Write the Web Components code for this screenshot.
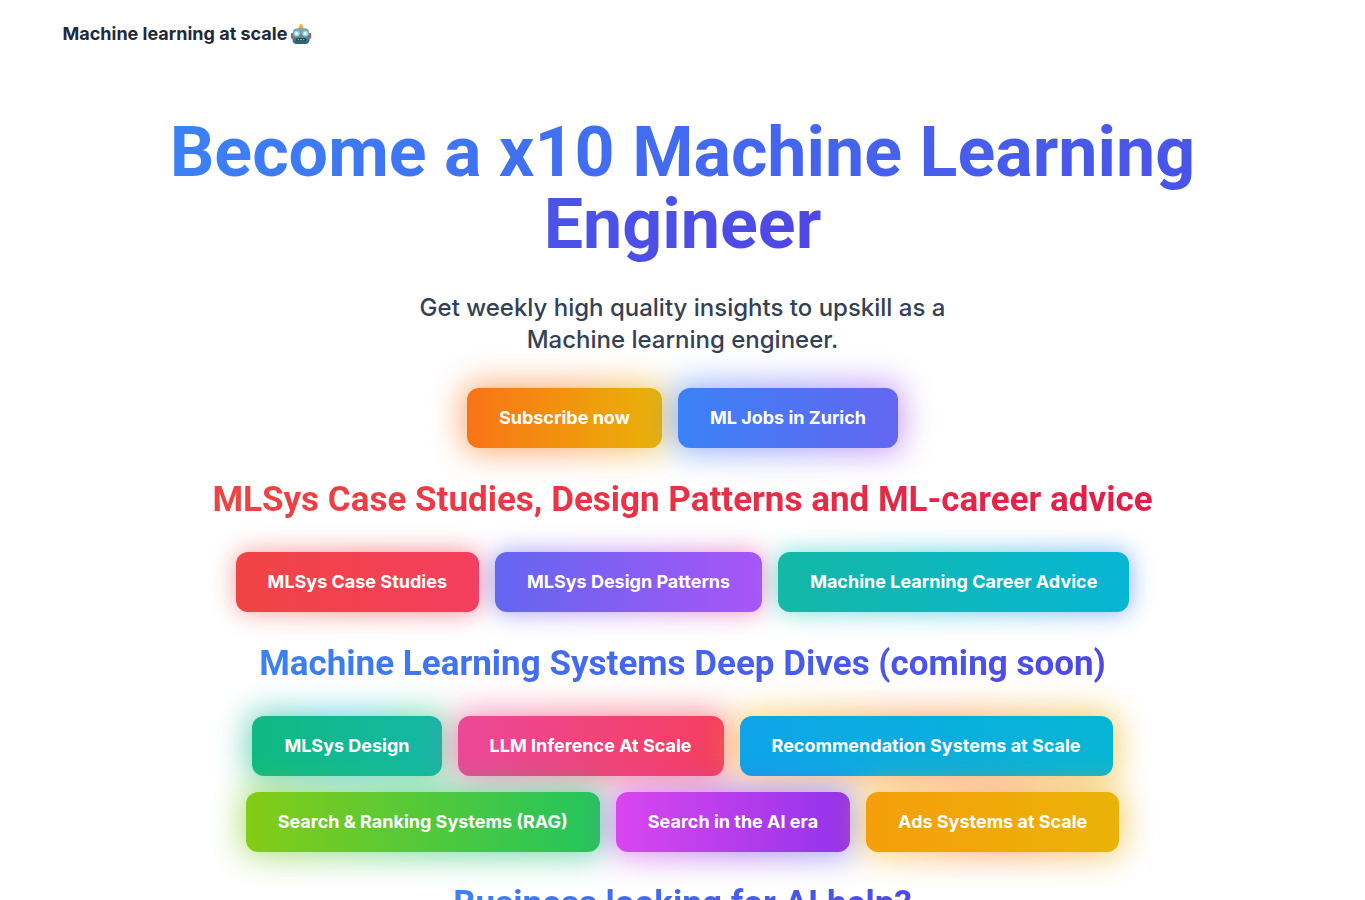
<!DOCTYPE html>
<html lang="en">
<head>
<meta charset="utf-8">
<meta name="viewport" content="width=device-width, initial-scale=1">
<title>Machine learning at scale</title>
<style>
  body { margin: 0; background: #fff; color: #1e293b; font-family: "Inter", "Liberation Sans", sans-serif; }
</style>
</head>
<body>
<landing-page></landing-page>

<script>
class RobotIcon extends HTMLElement {
  constructor() {
    super();
    this.attachShadow({ mode: "open" }).innerHTML = `
      <style>
        :host { display: inline-block; width: 20px; height: 20px; }
        svg { display: block; width: 100%; height: 100%; }
      </style>
      <svg viewBox="0 0 42 42" role="img" aria-label="Robot">
        <defs>
          <linearGradient id="face" x1="0" y1="0" x2="0" y2="1">
            <stop offset="0" stop-color="#8fa9ac"/><stop offset=".4" stop-color="#5fa3ab"/><stop offset="1" stop-color="#1f5f6b"/>
          </linearGradient>
        </defs>
        <path d="M16 11V8q5-3 10 0v3z" fill="#cf5a4a"/>
        <circle cx="21" cy="4" r="4" fill="#f6b73c"/>
        <rect x="0" y="19" width="6" height="12" rx="2" fill="#d0483f"/>
        <rect x="36" y="19" width="6" height="12" rx="2" fill="#d0483f"/>
        <path d="M4 18q0-9 9-9h16q9 0 9 9l1 14q0 10-9 10H12q-9 0-9-10z" fill="url(#face)"/>
        <circle cx="12" cy="20" r="6" fill="#8fe0ee"/><circle cx="30" cy="20" r="6" fill="#8fe0ee"/>
        <circle cx="12" cy="20" r="3" fill="#eefcff"/><circle cx="30" cy="20" r="3" fill="#eefcff"/>
        <path d="M21 21l3 6h-6z" fill="#e0524b"/>
        <rect x="10" y="30" width="22" height="6" rx="3" fill="#24424a"/>
        <path d="M14 32h3v2h-3zm5 0h4v2h-4zm6 0h3v2h-3z" fill="#d7c9c4"/>
      </svg>`;
  }
}
customElements.define("robot-icon", RobotIcon);

class SiteHeader extends HTMLElement {
  constructor() {
    super();
    this.attachShadow({ mode: "open" }).innerHTML = `
      <style>
        :host { display: block; }
        header { max-width: 1240px; margin: 0 auto; padding: 20px 0; }
        a { display: inline-flex; align-items: center; gap: 4px; color: #1e293b; text-decoration: none;
            font-size: 18px; line-height: 28px; font-weight: 700; }
      </style>
      <header><a href="#"><slot></slot><robot-icon></robot-icon></a></header>`;
  }
}
customElements.define("site-header", SiteHeader);

class GradientHeading extends HTMLElement {
  connectedCallback() {
    const tag = this.getAttribute("level") === "1" ? "h1" : "h2";
    this.attachShadow({ mode: "open" }).innerHTML = `
      <style>
        :host { display: block; text-align: center; --from: #3b82f6; --to: #4f46e5; }
        :host([tone="red"]) { --from: #ef4444; --to: #e11d48; }
        h1, h2 { margin: 0; font-family: "Roboto", "Liberation Sans", sans-serif; font-weight: 700; }
        h1 { font-size: 70px; line-height: 72px; }
        h2 { font-size: 35px; line-height: 40px; }
        span { color: transparent; background: linear-gradient(135deg, var(--from), var(--to));
               -webkit-background-clip: text; background-clip: text; }
      </style>
      <${tag}><span><slot></slot></span></${tag}>`;
  }
}
customElements.define("gradient-heading", GradientHeading);

class GlowButton extends HTMLElement {
  connectedCallback() {
    this.attachShadow({ mode: "open" }).innerHTML = `
      <style>
        :host { display: block; position: relative; }
        .glow { position: absolute; inset: -4px; border-radius: 12px; opacity: .6; filter: blur(16px);
                background: linear-gradient(to right, ${this.getAttribute("glow")}); }
        a { position: relative; display: block; padding: 16px 32px; border-radius: 12px; color: #fff;
            background: linear-gradient(to right, ${this.getAttribute("fill")}); text-align: center; text-decoration: none;
            font-size: 18px; line-height: 28px; font-weight: 700; white-space: nowrap; }
        :host([soft]) .glow { inset: -1px; filter: blur(12px); }
      </style>
      <div class="glow"></div>
      <a href="#"><slot></slot></a>`;
  }
}
customElements.define("glow-button", GlowButton);

class ButtonGroup extends HTMLElement {
  constructor() {
    super();
    this.attachShadow({ mode: "open" }).innerHTML = `
      <style>:host { display: flex; flex-wrap: wrap; justify-content: center; gap: 16px; }</style>
      <slot></slot>`;
  }
}
customElements.define("button-group", ButtonGroup);

class LandingPage extends HTMLElement {
  constructor() {
    super();
    this.attachShadow({ mode: "open" }).innerHTML = `
      <style>
        :host { display: block; overflow-x: clip; }
        main { display: flex; flex-direction: column; gap: 32px; max-width: 1056px; margin: 0 auto; padding: 48px 0; }
        p { margin: 0 auto; max-width: 576px; text-align: center; color: #334155;
            font-size: 24px; line-height: 32px; font-weight: 500; }
      </style>
      <site-header>Machine learning at scale</site-header>
      <main>
        <gradient-heading level="1">Become a x10 Machine Learning Engineer</gradient-heading>
        <p>Get weekly high quality insights to upskill as a Machine learning engineer.</p>
        <button-group>
          <glow-button fill="#f97316, #eab308" glow="#f97316, #f97316, #eab308">Subscribe now</glow-button>
          <glow-button fill="#3b82f6, #6366f1" glow="#3b82f6, #6366f1, #a855f7">ML Jobs in Zurich</glow-button>
        </button-group>
        <gradient-heading tone="red">MLSys Case Studies, Design Patterns and ML-career advice</gradient-heading>
        <button-group>
          <glow-button soft fill="#ef4444, #f43f5e" glow="#f87171, #ef4444, #f43f5e">MLSys Case Studies</glow-button>
          <glow-button soft fill="#6366f1, #a855f7" glow="#6366f1, #a855f7, #ec4899">MLSys Design Patterns</glow-button>
          <glow-button soft fill="#14b8a6, #06b6d4" glow="#2dd4bf, #06b6d4, #3b82f6">Machine Learning Career Advice</glow-button>
        </button-group>
        <gradient-heading>Machine Learning Systems Deep Dives (coming soon)</gradient-heading>
        <button-group>
          <glow-button fill="#10b981, #14b8a6" glow="#10b981, #06b6d4, #22c55e">MLSys Design</glow-button>
          <glow-button fill="#ec4899, #f43f5e" glow="#ec4899, #f43f5e, #ef4444">LLM Inference At Scale</glow-button>
          <glow-button fill="#0ea5e9, #06b6d4" glow="#fbbf24, #f97316, #eab308">Recommendation Systems at Scale</glow-button>
          <glow-button fill="#84cc16, #22c55e" glow="#84cc16, #22c55e, #10b981">Search &amp; Ranking Systems (RAG)</glow-button>
          <glow-button fill="#d946ef, #9333ea" glow="#d946ef, #9333ea, #6366f1">Search in the AI era</glow-button>
          <glow-button fill="#f59e0b, #eab308" glow="#fbbf24, #f97316, #eab308">Ads Systems at Scale</glow-button>
        </button-group>
        <gradient-heading>Business looking for AI help?</gradient-heading>
      </main>`;
  }
}
customElements.define("landing-page", LandingPage);
</script>
</body>
</html>
